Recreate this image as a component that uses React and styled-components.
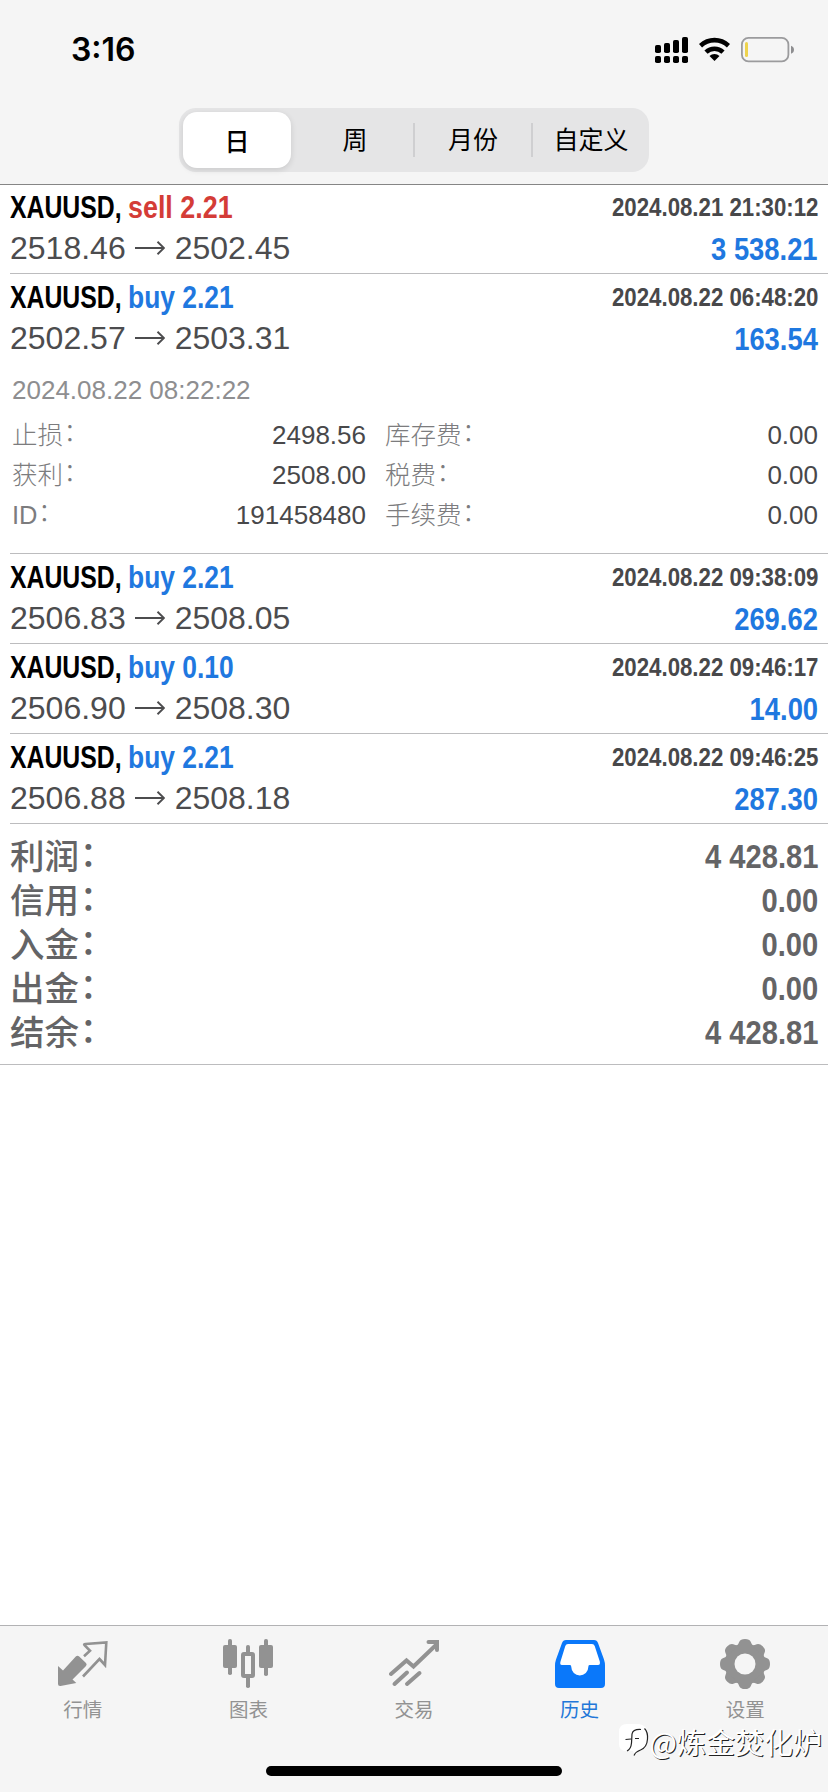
import React from 'react';
import styled, { createGlobalStyle, css } from 'styled-components';

const GlobalStyle = createGlobalStyle`
  body {
    margin: 0;
    background: #fff;
    font-family: 'Liberation Sans', 'Noto Sans CJK SC', sans-serif;
  }
`;

const Screen = styled.div`
  display: flex;
  flex-direction: column;
  position: relative;
  width: 828px;
  height: 1792px;
  background: #fff;
  overflow: hidden;
`;

const Header = styled.header`
  box-sizing: border-box;
  flex: none;
  height: 185px;
  background: #f5f5f5;
  border-bottom: 1px solid #858585;
`;

const StatusBar = styled.div`
  box-sizing: border-box;
  display: flex;
  justify-content: space-between;
  height: 108px;
  padding: 30px 34px 0 71px;
`;

const Time = styled.div`
  font: 600 32px/40px Inter, sans-serif;
  color: #000;
`;

const StatusIcons = styled.div`
  display: flex;
  padding-top: 7px;
  gap: 11px;
`;

const Segments = styled.div`
  box-sizing: border-box;
  display: grid;
  grid-template-columns: 114px 118px 118px 116px;
  width: 470px;
  height: 64px;
  margin: 0 auto;
  padding: 4px 0 4px 4px;
  border-radius: 17px;
  background: #e5e5e6;
`;

const Segment = styled.div`
  display: flex;
  align-items: center;
  justify-content: center;
  font: ${props => (props.$active ? 500 : 400)} 25px/53px 'Noto Sans CJK SC', sans-serif;
  color: #000;

  ${props => props.$active && css`
    width: 108px;
    border-radius: 14px;
    background: #fff;
    box-shadow: 0 2px 6px rgba(0, 0, 0, 0.12);
  `}
`;

const SegmentLabel = styled.span`
  flex: 1;
  padding-bottom: 3px;
  text-align: center;
`;

const Divider = styled.i`
  width: 2px;
  height: 34px;
  background: #cfcfd1;
`;

const List = styled.main`
  flex: 1;
  margin-top: -1px;
`;

const Deal = styled.div`
  margin-left: 10px;
  padding-top: 3px;
  padding-bottom: ${props => (props.$open ? 18 : 6)}px;
  border-bottom: 1px solid #bcbcbe;
`;

const Line = styled.div`
  display: flex;
  justify-content: space-between;
  height: 40px;
  padding-right: 10px;
  line-height: 40px;
  white-space: nowrap;
`;

const Title = styled.div`
  display: flex;
  font-size: 32px;
  font-weight: bold;
`;

const Symbol = styled.span`
  width: 118px;
  color: #000;
  transform: scaleX(0.775);
  transform-origin: left;
`;

const Action = styled.span`
  color: ${props => (props.$sell ? '#d43c37' : '#1f78e0')};
  transform: scaleX(${props => (props.$sell ? 0.84 : 0.825)});
  transform-origin: left;
`;

const DealTime = styled.span`
  font-size: 26px;
  font-weight: bold;
  color: #48484a;
  transform: scaleX(0.855);
  transform-origin: right;
`;

const Prices = styled.div`
  display: flex;
  align-items: center;
  gap: 9.5px;
  padding-top: 1px;
  font-size: 32px;
  color: #4c4c4e;
`;

const Profit = styled.span`
  padding-top: 2px;
  font-size: 32px;
  font-weight: bold;
  color: #1f78e0;
  transform: scaleX(0.855);
  transform-origin: right;
`;

const CloseTime = styled.div`
  margin: 11px 0 3px;
  padding-left: 2px;
  font-size: 26px;
  line-height: 44px;
  color: #8e8e90;
`;

const Details = styled.div`
  display: grid;
  grid-template-columns: 354px 433px;
  column-gap: 19px;
  padding-left: 2px;
`;

const Detail = styled.div`
  display: flex;
  justify-content: space-between;
  height: 40px;
  font-size: 26px;
  line-height: 40px;
  color: #48484a;
`;

const DetailLabel = styled.span`
  font-weight: 300;
  font-size: 25.5px;
  color: #7c7c7e;
`;

// full-width colon, raised to the middle of the line
const Colon = styled.span`
  display: inline-block;
  transform: translate(0.02em, -0.1em);
`;

const Totals = styled.div`
  padding: 11px 10px 9px;
  border-bottom: 1px solid #bcbcbe;
`;

const Total = styled.div`
  display: flex;
  justify-content: space-between;
  height: 44px;
  line-height: 44px;
  color: #646466;
`;

const TotalLabel = styled.span`
  font-size: 34.5px;
  font-weight: 500;
`;

const TotalValue = styled.span`
  font-size: 33.5px;
  font-weight: bold;
  transform: scaleX(0.87);
  transform-origin: right;
`;

const TabBar = styled.nav`
  box-sizing: border-box;
  display: grid;
  grid-template-columns: repeat(5, 1fr);
  flex: none;
  height: 167px;
  background: #f5f5f5;
  border-top: 1px solid #b2b2b4;
`;

const Tab = styled.div`
  display: flex;
  flex-direction: column;
  align-items: center;
  padding-top: 13px;
  color: ${props => (props.$active ? '#0a78fa' : '#929292')};
`;

const TabLabel = styled.span`
  margin-top: 5px;
  font: 400 19.5px/30px 'Noto Sans CJK SC', sans-serif;
  color: ${props => (props.$active ? '#2277d8' : '#929292')};
`;

const HomeIndicator = styled.div`
  position: absolute;
  left: 266px;
  bottom: 16px;
  width: 296px;
  height: 10px;
  border-radius: 5px;
  background: #000;
`;

const Watermark = styled.div`
  position: absolute;
  right: 6px;
  bottom: 31px;
  display: flex;
  align-items: center;
  font: 400 29px/40px 'Noto Sans CJK SC', sans-serif;
  color: #fff;
  text-shadow: 1px 1px 0.5px #222;
`;

const deals = [
  { side: 'sell', volume: '2.21', time: '2024.08.21 21:30:12', open: '2518.46', close: '2502.45', profit: '3 538.21' },
  {
    side: 'buy',
    volume: '2.21',
    time: '2024.08.22 06:48:20',
    open: '2502.57',
    close: '2503.31',
    profit: '163.54',
    closeTime: '2024.08.22 08:22:22',
    details: [
      ['止损', '2498.56'],
      ['库存费', '0.00'],
      ['获利', '2508.00'],
      ['税费', '0.00'],
      ['ID', '191458480'],
      ['手续费', '0.00'],
    ],
  },
  { side: 'buy', volume: '2.21', time: '2024.08.22 09:38:09', open: '2506.83', close: '2508.05', profit: '269.62' },
  { side: 'buy', volume: '0.10', time: '2024.08.22 09:46:17', open: '2506.90', close: '2508.30', profit: '14.00' },
  { side: 'buy', volume: '2.21', time: '2024.08.22 09:46:25', open: '2506.88', close: '2508.18', profit: '287.30' },
];

const totals = [
  ['利润', '4 428.81'],
  ['信用', '0.00'],
  ['入金', '0.00'],
  ['出金', '0.00'],
  ['结余', '4 428.81'],
];

const SignalIcon = () => (
  <svg width="33" height="26" viewBox="0 0 33 26">
    {[8, 6, 3, 0].map((top, i) => (
      <g key={top}>
        <rect x={i * 9} y={top} width="6" height={16 - top} rx="1.8" />
        <rect x={i * 9} y="19" width="6" height="7" rx="1.8" />
      </g>
    ))}
  </svg>
);

const WifiIcon = () => (
  <svg width="31" height="24" viewBox="0 0 31 24">
    <g fill="none" stroke="#000" strokeWidth="4.6">
      <path d="M1.5 8.7a20.5 20.5 0 0 1 28 0" />
      <path d="M7 15.2a12.3 12.3 0 0 1 17 0" />
    </g>
    <path d="M15.5 24l-5-5a7.2 7.2 0 0 1 10 0z" />
  </svg>
);

const BatteryIcon = () => (
  <svg width="53" height="26" viewBox="0 0 53 26">
    <rect x="0.9" y="0.9" width="46.5" height="23.4" rx="6.5" fill="none" stroke="#9b9b9d" strokeWidth="1.8" />
    <rect x="4" y="5" width="3" height="15" rx="1.5" fill="#eed34e" />
    <path d="M50 8.700c4 1.200 4 6.800 0 8z" fill="#8e8e90" />
  </svg>
);

const ArrowIcon = () => (
  <svg width="30" height="16" viewBox="0 0 30 16" fill="none" stroke="#4c4c4e" strokeWidth="1.9">
    <path d="M0 8h29M22.5 1.7l6.5 6.3l-6.5 6.3" />
  </svg>
);

const QuotesIcon = () => (
  <svg width="50" height="50" viewBox="0 0 50 50">
    <path
      fill="currentColor"
      d="M0 27L5 31.5L17.800 17.500Q19.500 15.800 21.200 17.500L28 24Q29.300 25.500 28 27L14.500 40.500L18.300 44L2.500 47Q0 47.300 0 45z"
    />
    <path
      fill="none"
      stroke="currentColor"
      strokeWidth="2.6"
      d="M26 17.300L32 11.800L26.500 6.200Q25.500 5.200 27.500 5L48.300 3.500L47 26L41.500 20L25 37.500"
    />
  </svg>
);

const ChartIcon = () => (
  <svg width="50" height="50" viewBox="0 0 50 50" fill="currentColor">
    <rect x="5" y="0" width="4" height="36" rx="1.8" />
    <rect x="0" y="6" width="14" height="23" rx="2" />
    <rect x="41" y="0" width="4" height="37" rx="1.8" />
    <rect x="36" y="6" width="14" height="23" rx="2" />
    <rect x="23" y="6" width="4" height="9" rx="1.8" />
    <rect x="23" y="37" width="4" height="12" rx="1.8" />
    <rect x="20" y="15" width="10" height="22" fill="none" stroke="currentColor" strokeWidth="4" rx="1" />
  </svg>
);

const TradeIcon = () => (
  <svg width="50" height="50" viewBox="0 0 50 50" fill="none" stroke="currentColor" strokeWidth="4" strokeLinecap="round">
    <path d="M2 35L17.5 21.5L24.500 27.500L47 6" />
    <path d="M39.500 3H48V11" />
    <path d="M5.500 45L18 33.500M18 45L30.500 34" />
  </svg>
);

const HistoryIcon = () => (
  <svg width="50" height="50" viewBox="0 0 50 50">
    <path fill="currentColor" d="M11 1H39Q42 1 43 4L49 20.500Q50 23.500 50 26.500V45Q50 49 46 49H4Q0 49 0 45V26.500Q0 23.500 1 20.500L7 4Q8 1 11 1z" />
    <path fill="#fff" d="M13 5H37Q39 5 39.700 7L44.800 22.500Q45.500 26 43 26H34.500Q33.300 26 33.300 28A8.500 8.500 0 0 1 16.300 28Q16.300 26 15 26H7Q4.500 26 5.500 22.500L10.300 7Q11 5 13 5z" />
  </svg>
);

const SettingsIcon = () => (
  <svg width="50" height="50" viewBox="0 0 50 50">
    <g fill="currentColor">
      <circle cx="25" cy="25" r="20" />
      {[0, 45, 90, 135, 180, 225, 270, 315].map(angle => (
        <path key={angle} d="M16.500 7Q18.500 5.500 19.300 2.800Q20.500 0 25 0T30.700 2.800Q31.500 5.500 33.500 7z" transform={`rotate(${angle} 25 25)`} />
      ))}
    </g>
    <circle cx="25" cy="25" r="10.5" fill="#f5f5f5" />
  </svg>
);

const WatermarkLogo = () => (
  <svg width="31" height="34" viewBox="0 0 31 34">
    <path d="M8 0H20Q29 1 29 12Q29 24 22 26.500Q18 28 15.500 31L14 27H7Q0 27 0 20V8Q0 0 8 0z" fill="#fff" />
    <path
      d="M25.500 4.500Q29 8 28.500 15Q28 23.500 21.500 26Q17 27.500 15 31.500M8 27Q12 25 12.500 19L13 10Q14 5 22 5.500M6.500 15.500L12 15M16 14.500H20"
      fill="none"
      stroke="#222"
      strokeWidth="1.2"
    />
  </svg>
);

const tabs = [
  { label: '行情', icon: <QuotesIcon /> },
  { label: '图表', icon: <ChartIcon /> },
  { label: '交易', icon: <TradeIcon /> },
  { label: '历史', icon: <HistoryIcon />, active: true },
  { label: '设置', icon: <SettingsIcon /> },
];

const DealRow = ({ deal }) => (
  <Deal $open={!!deal.details}>
    <Line>
      <Title>
        <Symbol>XAUUSD,</Symbol>
        <Action $sell={deal.side === 'sell'}>{deal.side} {deal.volume}</Action>
      </Title>
      <DealTime>{deal.time}</DealTime>
    </Line>
    <Line>
      <Prices>
        <span>{deal.open}</span>
        <ArrowIcon />
        <span>{deal.close}</span>
      </Prices>
      <Profit>{deal.profit}</Profit>
    </Line>
    {deal.details && (
      <>
        <CloseTime>{deal.closeTime}</CloseTime>
        <Details>
          {deal.details.map(([label, value]) => (
            <Detail key={label}>
              <DetailLabel>{label}<Colon>：</Colon></DetailLabel>
              <span>{value}</span>
            </Detail>
          ))}
        </Details>
      </>
    )}
  </Deal>
);

const App = () => (
  <Screen>
    <GlobalStyle />

    <Header>
      <StatusBar>
        <Time>3:16</Time>
        <StatusIcons>
          <SignalIcon />
          <WifiIcon />
          <BatteryIcon />
        </StatusIcons>
      </StatusBar>
      <Segments>
        <Segment $active>日</Segment>
        <Segment><SegmentLabel>周</SegmentLabel><Divider /></Segment>
        <Segment><SegmentLabel>月份</SegmentLabel><Divider /></Segment>
        <Segment><SegmentLabel>自定义</SegmentLabel></Segment>
      </Segments>
    </Header>

    <List>
      {deals.map(deal => <DealRow key={deal.time} deal={deal} />)}
      <Totals>
        {totals.map(([label, value]) => (
          <Total key={label}>
            <TotalLabel>{label}<Colon>：</Colon></TotalLabel>
            <TotalValue>{value}</TotalValue>
          </Total>
        ))}
      </Totals>
    </List>

    <TabBar>
      {tabs.map(({ label, icon, active }) => (
        <Tab key={label} $active={active}>
          {icon}
          <TabLabel $active={active}>{label}</TabLabel>
        </Tab>
      ))}
    </TabBar>

    <HomeIndicator />
    <Watermark>
      <WatermarkLogo />
      @炼金焚化炉
    </Watermark>
  </Screen>
);

export default App;
